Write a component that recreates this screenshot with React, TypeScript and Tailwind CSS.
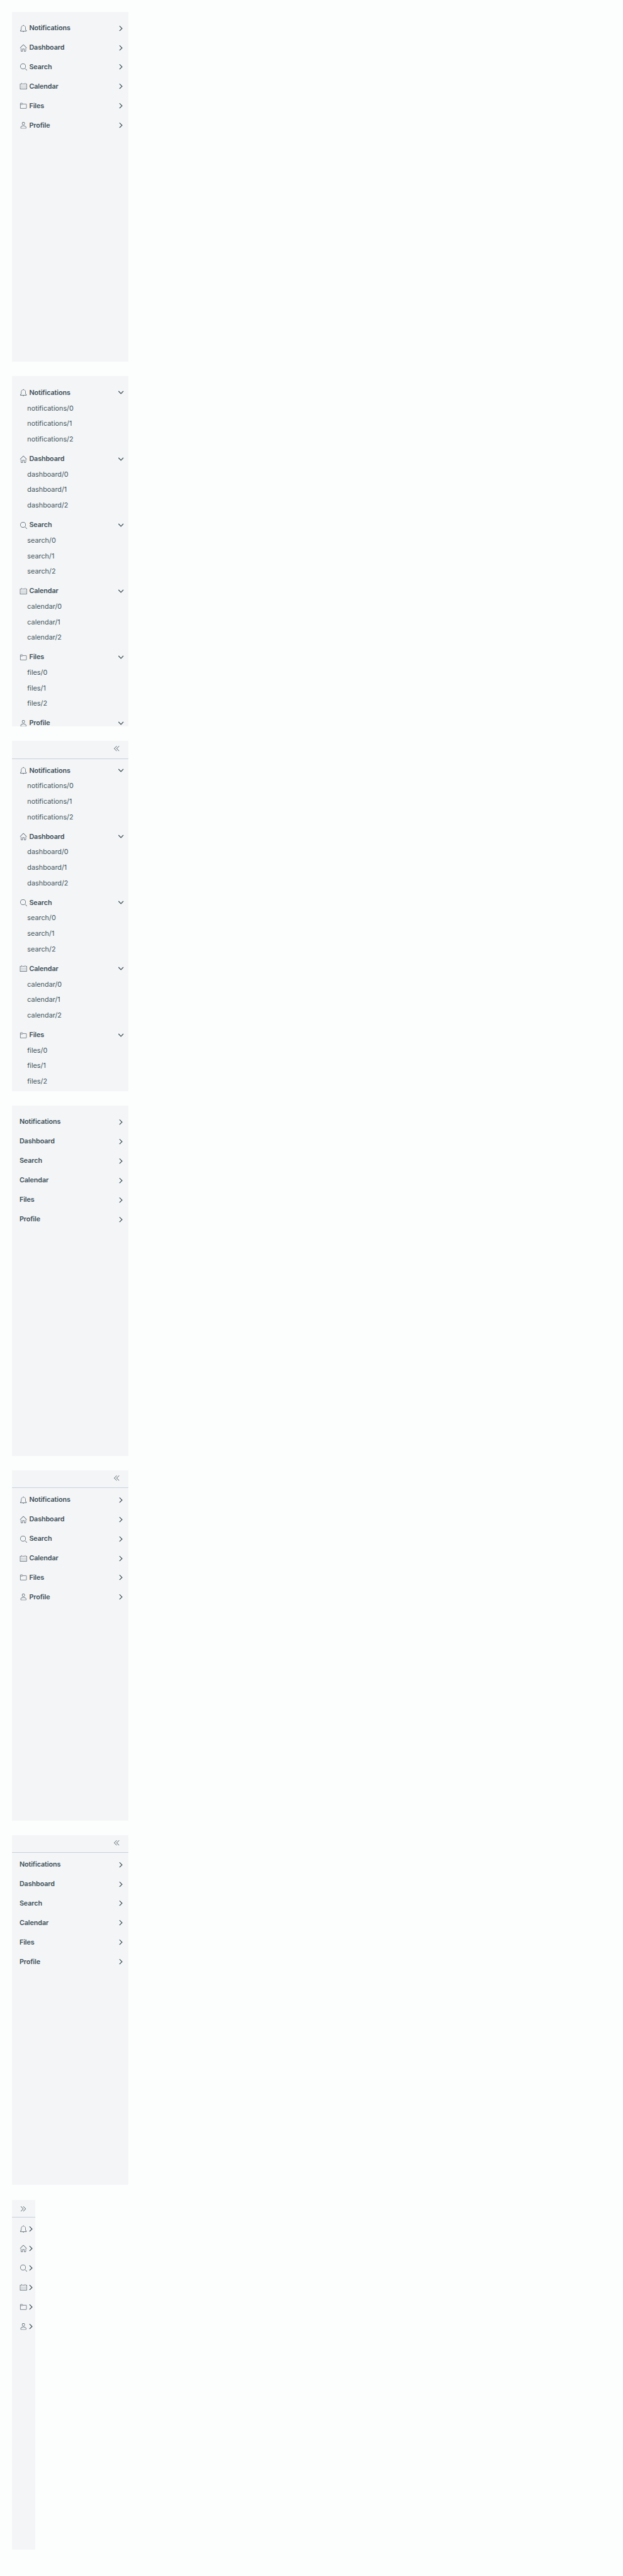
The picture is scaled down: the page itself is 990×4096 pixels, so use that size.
import type { ReactNode } from 'react';

const sections = ['Notifications', 'Dashboard', 'Search', 'Calendar', 'Files', 'Profile'] as const;
type Section = (typeof sections)[number];

const shapes: Record<Section, ReactNode> = {
  Notifications: (
    <>
      <path d="M32.51,27.83A14.4,14.4,0,0,1,30,24.9a12.63,12.63,0,0,1-1.35-4.81V15.15A10.81,10.81,0,0,0,19.21,4.4V3.11a1.33,1.33,0,1,0-2.67,0V4.42A10.81,10.81,0,0,0,7.21,15.15v4.94A12.63,12.63,0,0,1,5.86,24.9a14.4,14.4,0,0,1-2.47,2.93,1,1,0,0,0-.34.75v1.36a1,1,0,0,0,1,1h27.8a1,1,0,0,0,1-1V28.58A1,1,0,0,0,32.51,27.83ZM5.13,28.94a16.17,16.17,0,0,0,2.44-3,14.24,14.24,0,0,0,1.65-5.85V15.15a8.74,8.74,0,1,1,17.47,0v4.94a14.24,14.24,0,0,0,1.65,5.85,16.17,16.17,0,0,0,2.44,3Z" />
      <path d="M18,34.28A2.67,2.67,0,0,0,20.58,32H15.32A2.67,2.67,0,0,0,18,34.28Z" />
    </>
  ),
  Dashboard: (
    <>
      <path d="M33.71,17.29l-15-15a1,1,0,0,0-1.41,0l-15,15a1,1,0,0,0,1.41,1.41L18,4.41,32.29,18.71a1,1,0,0,0,1.41-1.41Z" />
      <path d="M28,32h-5V22H13V32H8V18L6,20V32a2,2,0,0,0,2,2h7V24h6V34h7a2,2,0,0,0,2-2V19.76l-2-2Z" />
    </>
  ),
  Search: (
    <>
      <path d="M16.33,5.05A10.95,10.95,0,1,1,5.39,16,11,11,0,0,1,16.33,5.05m0-2.05a13,13,0,1,0,13,13,13,13,0,0,0-13-13Z" />
      <path d="M35,33.29l-7.37-7.42-1.42,1.41,7.37,7.42A1,1,0,1,0,35,33.29Z" />
    </>
  ),
  Calendar: (
    <>
      <path d="M32.25,6H29V8h3V30H4V8H7V6H3.75A1.78,1.78,0,0,0,2,7.81V30.19A1.78,1.78,0,0,0,3.75,32h28.5A1.78,1.78,0,0,0,34,30.19V7.81A1.78,1.78,0,0,0,32.25,6Z" />
      {[14, 19, 24].map((y) => [8, 14, 20, 26].map((x) => <rect key={`${x}-${y}`} x={x} y={y} width="2" height="2" />))}
      <path d="M10,10a1,1,0,0,0,1-1V3A1,1,0,0,0,9,3V9A1,1,0,0,0,10,10Z" />
      <path d="M26,10a1,1,0,0,0,1-1V3a1,1,0,0,0-2,0V9A1,1,0,0,0,26,10Z" />
      <rect x="13" y="6" width="10" height="2" />
    </>
  ),
  Files: (
    <g fill="none" stroke="currentColor" strokeWidth="2" strokeLinejoin="round">
      <path d="M4,29.5V7a1,1,0,0,1,1-1h8l3,4H31a1,1,0,0,1,1,1V29a1,1,0,0,1-1,1H5a1,1,0,0,1-1-1Z" />
      <path d="M5,12h8a2.5,2.5,0,0,0,2.5-1.5" />
    </g>
  ),
  Profile: (
    <>
      <path d="M18,17a7,7,0,1,0-7-7A7,7,0,0,0,18,17ZM18,5a5,5,0,1,1-5,5A5,5,0,0,1,18,5Z" />
      <path d="M30.47,24.37a17.16,17.16,0,0,0-24.93,0A2,2,0,0,0,5,25.74V31a2,2,0,0,0,2,2H29a2,2,0,0,0,2-2V25.74A2,2,0,0,0,30.47,24.37ZM29,31H7V25.73a15.17,15.17,0,0,1,22,0Z" />
    </>
  ),
};

function Icon({ className = '', children }: { className?: string; children: ReactNode }) {
  return (
    <svg viewBox="0 0 36 36" fill="currentColor" className={`size-[12.375px] shrink-0 ${className}`}>
      {children}
    </svg>
  );
}

function Angle({ open }: { open: boolean }) {
  return (
    <Icon className={open ? 'rotate-180 text-[#3b4f57]' : 'rotate-90 text-[#3b4f57]'}>
      <path d="M29.52,22.52,18,10.6,6.48,22.52a1.7,1.7,0,0,0,2.45,2.36L18,15.49l9.08,9.39a1.7,1.7,0,0,0,2.45-2.36Z" />
    </Icon>
  );
}

function DoubleAngle({ className }: { className: string }) {
  return (
    <Icon className={className}>
      <path d="M29,19.41a1,1,0,0,1-.71-.29L18,8.83,7.71,19.12a1,1,0,0,1-1.41-1.41L18,6,29.71,17.71A1,1,0,0,1,29,19.41Z" />
      <path d="M29,30.41a1,1,0,0,1-.71-.29L18,19.83,7.71,30.12a1,1,0,0,1-1.41-1.41L18,17,29.71,28.71A1,1,0,0,1,29,30.41Z" />
    </Icon>
  );
}

interface SideNavProps {
  icons?: boolean;
  expanded?: boolean;
  collapsible?: boolean;
  collapsed?: boolean;
}

const PANEL_HEIGHT = 720;
const ROW_HEIGHT = 32;

/** Keeps the rows of an expanded nav that start inside the panel. */
function visibleRows(expanded: boolean, collapsible: boolean) {
  let top = collapsible ? 37 : 10;
  return sections.flatMap((name) => {
    top += 8;
    if (top >= PANEL_HEIGHT) return [];
    top += ROW_HEIGHT;
    const links: string[] = [];
    for (let n = 0; expanded && n < 3; n++) {
      if (top < PANEL_HEIGHT) links.push(`${name.toLowerCase()}/${n}`);
      top += ROW_HEIGHT;
    }
    return [{ name, links }];
  });
}

function SideNav({ icons = false, expanded = false, collapsible = false, collapsed = false }: SideNavProps) {
  return (
    <nav
      className={`flex h-[556.65px] shrink-0 flex-col overflow-hidden bg-[#f4f5f7] ${collapsed ? 'w-[37.125px]' : 'w-[185.625px]'}`}
    >
      {collapsible ? (
        <button
          type="button"
          className={`flex h-[28.6px] w-full shrink-0 border-b border-[#c6d2dc] text-[#465861] ${collapsed ? 'justify-start pt-[8.5px] pl-[12.375px]' : 'justify-end pt-[6.2px] pr-[12.375px]'}`}
        >
          <DoubleAngle className={collapsed ? 'rotate-90' : '-rotate-90'} />
        </button>
      ) : (
        <div className="h-[7.73px] shrink-0" />
      )}
      {visibleRows(expanded, collapsible).map(({ name, links }) => (
        <section key={name} className="mt-[6.185px] shrink-0">
          <div className="flex h-[24.74px] items-center pl-[12.375px]">
            {icons && <Icon className="text-[#465861]">{shapes[name]}</Icon>}
            {!collapsed && (
              <span className={`grow pt-[0.6px] text-[10.83px] font-semibold tracking-[-0.012em] text-[#3f525a] ${icons ? 'ml-[3.1px]' : ''}`}>
                {name}
              </span>
            )}
            <div className={collapsed ? '' : 'mr-[6.1875px]'}>
              <Angle open={expanded} />
            </div>
          </div>
          {links.map((link) => (
            <div key={link} className="flex h-[24.74px] items-center pt-[0.6px] pl-[24.75px] text-[10.83px] text-[#42555d]">
              {link}
            </div>
          ))}
        </section>
      ))}
    </nav>
  );
}

export default function App() {
  return (
    <main className="flex h-[4096px] w-full flex-col gap-[23.19px] overflow-hidden bg-[#fcfefd] p-[18.56px] font-['Inter','Liberation_Sans',sans-serif]">
      <SideNav icons />
      <SideNav icons expanded />
      <SideNav icons expanded collapsible />
      <SideNav />
      <SideNav icons collapsible />
      <SideNav collapsible />
      <SideNav icons collapsible collapsed />
    </main>
  );
}
